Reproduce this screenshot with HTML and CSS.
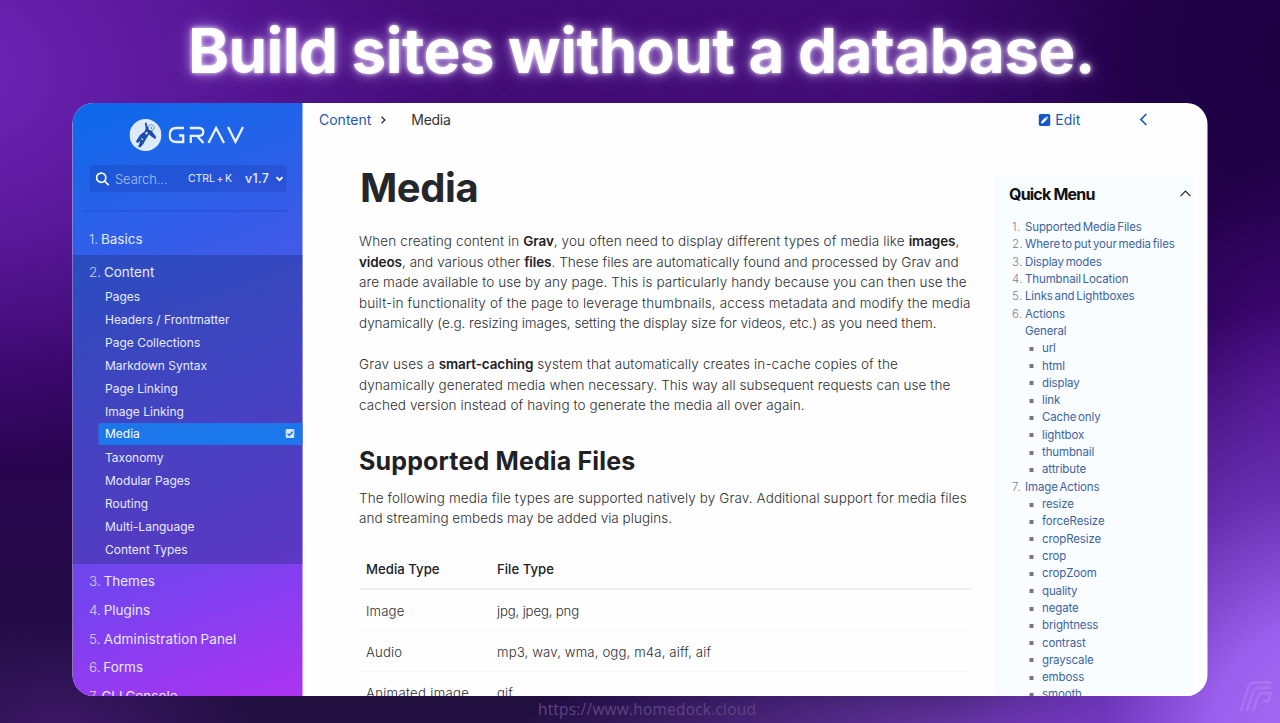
FILE: index.html
```html
<!DOCTYPE html>
<html lang="en">
<head>
<meta charset="utf-8">
<title>Build sites without a database.</title>
<link rel="stylesheet" href="styles.css">
</head>
<body>
<div class="stage">
  <h1 class="headline"><span>Build sites without a database.</span></h1>
  <div class="window">
    <aside class="sidebar">
      <div class="brand">
        <svg class="brand-mark" viewBox="0 0 32 32"><circle cx="16" cy="16" r="16" fill="#dcebff"/><g fill="#1d4fae"><path d="M15.300 4l1.700-.6 1.200 4.800 1.300-2q2.300-1.600 4.500.2 2 2.400 0 4.600l-1.600 1.300 4.200 5.500-.6 2.200-1.400-.4-5.200-4.200-3.400 5.600-2 3.800-3.200 3.600-2.200-.6 2.200-5.600-3 1.800-1.400-1.400 4-6.600 4.600-3.400 1.200-3.200z"/></g><circle cx="21.700" cy="8.800" r="2.700" fill="#dcebff"/><circle cx="22" cy="9" r=".8" fill="#1d4fae"/><path d="M15.500 14l2-1.200 1 1.400-1.800 1.600zM12 19l2 1.400-.6.800-2-1.400z" fill="#dcebff"/></svg>
        <svg class="brand-word" viewBox="0 0 76 18" role="img" aria-label="GRAV"><g fill="none" stroke="#eaf2ff" stroke-width="2.300"><path d="M15.500 2H8Q1.200 2 1.200 9t6.800 7h6.700V9.500H10.500"/><path d="M22.300 17V9.800h8.500q4-.3 4-3.900T30.800 2h-9.500M28.500 10l6.500 7"/><path d="M40 17l7.600-15L55.500 17"/><path d="M59.500 1l7.500 14.800L74.500 1"/></g></svg>
      </div>
      <div class="search">
        <svg class="i-search" viewBox="0 0 14 14"><circle cx="5.700" cy="5.700" r="4.600"/><path d="M9 9l4.200 4.200"/></svg>
        <span class="ph">Search...</span><span class="key">CTRL + K</span><span class="ver">v1.7</span>
        <svg class="i-down" viewBox="0 0 8 6"><path d="M1 1.200l3 3 3-3"/></svg>
      </div>
      <hr class="rule">
      <div class="top basics"><i>1.</i> Basics</div>
      <div class="group">
        <div class="top open"><i>2.</i> Content</div>
        <ul class="sub">
          <li>Pages</li><li>Headers / Frontmatter</li><li>Page Collections</li><li>Markdown Syntax</li><li>Page Linking</li><li>Image Linking</li>
          <li class="on">Media <svg viewBox="0 0 9 9"><rect width="9" height="9" rx="1.500" fill="#cfe6ff"/><path d="M2 4.600l1.800 1.800L7.200 2.700" fill="none" stroke="#1a66d8" stroke-width="1.300"/></svg></li>
          <li>Taxonomy</li><li>Modular Pages</li><li>Routing</li><li>Multi-Language</li><li>Content Types</li>
        </ul>
      </div>
      <div class="rest">
        <div class="top"><i>3.</i> Themes</div><div class="top"><i>4.</i> Plugins</div><div class="top admin"><i>5.</i> Administration Panel</div><div class="top"><i>6.</i> Forms</div><div class="top"><i>7.</i> CLI Console</div>
      </div>
    </aside>
    <main class="page">
      <nav class="crumbs">
        <span class="link">Content</span>
        <svg class="i-right" viewBox="0 0 6 8"><path d="M1 .8l3.400 3.200L1 7.200"/></svg>
        <span class="here">Media</span>
        <svg class="i-edit" viewBox="0 0 12 12"><rect width="12" height="12" rx="2" fill="#1559c4"/><path d="M2.500 9.500l.5-2.300 3.800-3.800 1.800 1.800-3.800 3.800zM7.400 2.900l.7-.7 1.800 1.800-.7.700z" fill="#fff"/></svg>
        <span class="link edit">Edit</span>
        <svg class="i-left" viewBox="0 0 8 13"><path d="M6.800 1L1.400 6.500 6.800 12"/></svg>
      </nav>
      <div class="columns">
        <article class="article">
          <h2>Media</h2>
          <p><span class="a1">When creating content in <b>Grav</b>, you often need to display different types of media like <b>images</b>,</span><span class="a2"><b>videos</b>, and various other <b>files</b>. These files are automatically found and processed by Grav and</span><span class="a3">are made available to use by any page. This is particularly handy because you can then use the</span><span class="a4">built-in functionality of the page to leverage thumbnails, access metadata and modify the media</span><span class="a5">dynamically (e.g. resizing images, setting the display size for videos, etc.) as you need them.</span></p>
          <p><span class="b1">Grav uses a <b>smart-caching</b> system that automatically creates in-cache copies of the</span><span class="b2">dynamically generated media when necessary. This way all subsequent requests can use the</span><span class="b3">cached version instead of having to generate the media all over again.</span></p>
          <h3>Supported Media Files</h3>
          <p class="lead"><span class="c1">The following media file types are supported natively by Grav. Additional support for media files</span><span class="c2">and streaming embeds may be added via plugins.</span></p>
          <div class="table">
            <div class="row head"><span>Media Type</span><span>File Type</span></div>
            <div class="row"><span>Image</span><span class="ext">jpg, jpeg, png</span></div>
            <div class="row"><span>Audio</span><span>mp3, wav, wma, ogg, m4a, aiff, aif</span></div>
            <div class="row"><span class="anim">Animated image</span><span>gif</span></div>
          </div>
        </article>
        <aside class="quick">
          <div class="quick-head"><span>Quick Menu</span><svg viewBox="0 0 12 7"><path d="M1 6.200L6 1.200l5 5"/></svg></div>
          <ul>
            <li><i>1.</i>Supported Media Files</li><li><i>2.</i>Where to put your media files</li><li><i>3.</i>Display modes</li><li><i>4.</i>Thumbnail Location</li><li><i>5.</i>Links and Lightboxes</li><li><i>6.</i>Actions</li><li><i></i>General</li>
            <li class="s">url</li><li class="s">html</li><li class="s">display</li><li class="s">link</li><li class="s">Cache only</li><li class="s">lightbox</li><li class="s">thumbnail</li><li class="s">attribute</li>
            <li><i>7.</i>Image Actions</li>
            <li class="s">resize</li><li class="s">forceResize</li><li class="s">cropResize</li><li class="s">crop</li><li class="s">cropZoom</li><li class="s">quality</li><li class="s">negate</li><li class="s">brightness</li><li class="s">contrast</li><li class="s">grayscale</li><li class="s">emboss</li><li class="s">smooth</li>
          </ul>
        </aside>
      </div>
    </main>
  </div>
  <footer class="url"><span>https://www.homedock.cloud</span></footer>
  <svg class="corner" viewBox="0 0 32 31"><g fill="none" stroke="#d6b5ff" stroke-opacity=".2" stroke-width="2.800"><path d="M1 30L8.500 6q1.500-4.500 6-4.500h17"/><path d="M6.500 30l7-20q1.300-3.500 5-3.500h12.500"/><path d="M13 30l5.500-15q1-3 4-3h8l-2 8h-6"/></g></svg>
</div>
</body>
</html>
```
FILE: styles.css
```css
* { box-sizing: border-box; }
body { margin: 0; font-family: Inter, "Liberation Sans", sans-serif; }
ul { list-style: none; margin: 0; padding: 0; }
i { font-style: normal; }
svg { display: block; flex: none; }

.stage {
  position: relative; width: 1280px; height: 723px; overflow: hidden;
  display: flex; flex-direction: column; align-items: center;
  background:
    radial-gradient(ellipse 360px 450px at 1310px 750px, #a66cf6 0%, #9a5fec 28%, rgba(115,55,195,.8) 58%, rgba(90,20,160,0) 100%),
    radial-gradient(ellipse 560px 110px at 1060px 745px, rgba(125,65,200,.95) 0%, rgba(110,50,190,0) 100%),
    radial-gradient(ellipse 520px 400px at -60px 70px, #6f26b8 0%, rgba(100,30,170,.85) 35%, rgba(70,10,120,0) 100%),
    radial-gradient(ellipse 200px 120px at 60px 740px, rgba(65,25,110,.9) 0%, rgba(65,25,110,0) 100%),
    radial-gradient(ellipse 140px 240px at 1290px 400px, rgba(75,10,135,.8) 0%, rgba(75,10,135,0) 100%),
    radial-gradient(ellipse 420px 360px at 1320px 60px, #1c0040 0%, rgba(30,0,68,.9) 45%, rgba(30,0,68,0) 100%),
    linear-gradient(180deg, #400b72 0, #420c76 14%, #2a0054 50%, #21103f 100%);
}
.headline { margin: 0; height: 103px; padding: 13px 0 0 3px; font-size: 62px; line-height: 75px; font-weight: 700; letter-spacing: -.58px; color: #fff; white-space: nowrap; text-shadow: 0 0 4px rgba(255,255,255,.85), 0 0 12px rgba(225,195,255,.65), 0 0 24px rgba(190,150,255,.4); }
.window { display: flex; width: 1135px; height: 593px; border-radius: 21px; overflow: hidden; background: #fefefe; flex: none; transform: translateX(-.5px); }

.sidebar { width: 230px; flex: none; color: #e6eaff; background: linear-gradient(160deg, #0b6aea 0%, #4459e8 35%, #7643ee 75%, #ad33f2 100%); display: flex; flex-direction: column; }
.brand { display: flex; align-items: center; gap: 7px; padding: 16px 0 0 57px; height: 48px; flex: none; }
.brand-mark { width: 32px; height: 32px; }
.brand-word { width: 76px; height: 18px; }
.search { display: flex; align-items: center; flex: none; height: 27px; margin: 14px 16px 0 17px; padding-left: 6px; background: rgba(25,45,165,.24); white-space: nowrap; }
.search span { flex: none; }
.search svg { fill: none; stroke: #fff; stroke-width: 1.700; }
.i-search { width: 14px; height: 14px; }
.ph { font-size: 13px; font-weight: 300; letter-spacing: -.1px; color: #a5c3ff; width: 79px; padding-left: 6px; }
.key { font-size: 10.500px; letter-spacing: -.1px; word-spacing: -1.200px; width: 57px; }
.ver { font-size: 12.500px; font-weight: 500; letter-spacing: .3px; width: 30px; }
.i-down { width: 8px; height: 6px; }
.rule { border: 0; height: 2px; width: 205px; margin: 18px 0 0 11px; flex: none; background: rgba(35,45,180,.22); }
.top { font-size: 13.500px; line-height: 29px; padding-left: 17px; word-spacing: -1px; white-space: nowrap; }
.top i { font-weight: 300; opacity: .85; }
.basics { margin-top: 13px; height: 30px; flex: none; }
.group { background: rgba(28,40,110,.34); height: 309px; flex: none; }
.open { padding-top: 3px; height: 30px; }
.sub { margin-top: -.5px; }
.sub li { font-size: 12px; line-height: 23.080px; height: 23.080px; padding-left: 33px; white-space: nowrap; }
.sub .on { margin-left: 26px; padding-left: 7px; background: #1c78ea; display: flex; justify-content: space-between; align-items: center; padding-right: 8px; color: #fff; height: 22px; margin-bottom: 1.080px; border-radius: 2px 0 0 2px; }
.sub .on svg { width: 9px; height: 9px; }
.rest { padding-top: 3px; }
.rest .top { height: 28.800px; }
.admin { letter-spacing: .14px; }

.page { flex: 1; min-width: 0; color: #2c2e33; }
.crumbs { display: flex; align-items: center; height: 33px; margin-bottom: 1px; font-size: 14px; padding-left: 17px; color: #333; }
.link { color: #2359ad; }
.crumbs svg { fill: none; stroke: #333; stroke-width: 1.300; }
.i-right { width: 6px; height: 8px; margin-left: 9px; }
.here { width: 627px; margin-left: 25px; letter-spacing: -.3px; }
.crumbs .i-edit { width: 12px; height: 12px; stroke: none; }
.edit { width: 84px; margin-left: 5px; }
.crumbs .i-left { width: 8px; height: 13px; stroke: #1858bd; stroke-width: 1.700; }
.columns { display: flex; }
.article { width: 692px; flex: none; padding: 25px 22px 0 57px; white-space: nowrap; }
.article h2 { margin: 0 0 0 1px; font-size: 40px; line-height: 52px; font-weight: 700; letter-spacing: -.4px; color: #24262b; }
.article p { margin: 17px 0 0; font-size: 13.500px; line-height: 20.600px; font-weight: 300; letter-spacing: .13px; }
.article p + p { margin-top: 20px; }
.article p span { display: block; }
.a2 { letter-spacing: .06px; }
.a3 { letter-spacing: .1px; }
.a5 { letter-spacing: -.03px; }
.b2 { letter-spacing: .07px; }
.b3 { letter-spacing: .09px; }
.c1 { letter-spacing: .1px; }
.c2 { letter-spacing: .02px; }
.article b { font-weight: 600; color: #1e2025; letter-spacing: -.1px; }
.article h3 { margin: 28px 0 0; font-size: 25px; line-height: 34px; font-weight: 700; letter-spacing: .15px; color: #1f2125; }
.article .lead { margin-top: 10px; }
.table { margin-top: 19px; width: 612px; font-size: 13.200px; font-weight: 300; letter-spacing: .13px; }
.row { display: grid; grid-template-columns: 131px 1fr; height: 41px; line-height: 43px; padding-left: 7px; border-bottom: 1px solid #f5f7f8; }
.head { height: 42px; font-weight: 500; color: #202226; border-bottom: 2px solid #eceef0; letter-spacing: 0; }
.ext { letter-spacing: -.15px; }
.anim { letter-spacing: .3px; }
.quick { margin-top: 39px; width: 199px; height: 520px; padding-left: 15px; background: #fafdff; }
.quick-head { display: flex; align-items: center; justify-content: space-between; height: 35px; padding-right: 2px; font-size: 16px; font-weight: 700; letter-spacing: -.8px; color: #111; }
.quick-head svg { width: 12px; height: 7px; fill: none; stroke: #222; stroke-width: 1.200; }
.quick ul { padding-top: 8px; }
.quick li { display: flex; font-size: 11.500px; line-height: 17.320px; height: 17.320px; color: #3a64a0; white-space: nowrap; letter-spacing: -.13px; word-spacing: -1.300px; }
.quick li i { width: 16px; padding-left: 3px; color: #7d818a; font-weight: 300; letter-spacing: .5px; flex: none; }
.quick .s { align-items: center; }
.quick .s::before { content: ""; width: 4px; height: 4px; margin: 0 9px 0 20px; background: #77738c; }
.url { padding: 2px 0 0 14px; font: 15.500px/22px "Open Sans", sans-serif; letter-spacing: .2px; color: #5f4381; }
.corner { position: absolute; left: 1240px; top: 681px; width: 32px; height: 31px; }
```
